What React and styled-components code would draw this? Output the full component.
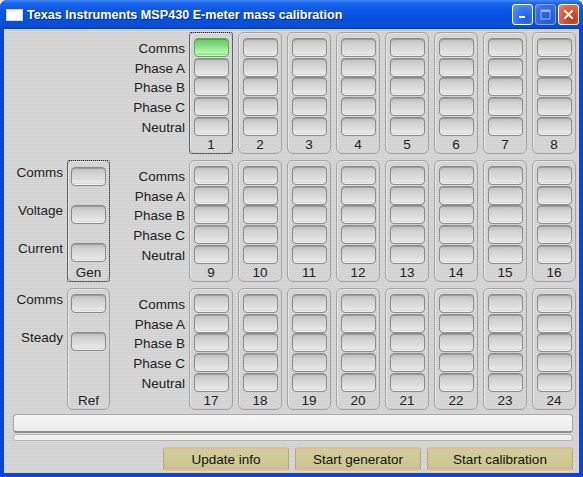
import React from "react";
import styled, { createGlobalStyle, css } from "styled-components";

const GlobalStyle = createGlobalStyle`
  html, body {
    margin: 0;
    padding: 0;
    background: #ece9d8;
  }
  body {
    font-family: "Liberation Sans", Arial, sans-serif;
  }
`;

const meterRows = ["Comms", "Phase A", "Phase B", "Phase C", "Neutral"];

const sections = [
  { side: null, start: 1 },
  {
    side: { name: "Gen", focused: true, rows: ["Comms", "Voltage", "Current"], step: 38, top: 6 },
    start: 9,
  },
  {
    side: { name: "Ref", focused: false, rows: ["Comms", "Steady"], step: 38, top: 5 },
    start: 17,
  },
];

function MinIcon() {
  return (
    <svg width="9" height="9" viewBox="0 0 9 9">
      <rect x="1" y="6" width="6" height="2" fill="#fff" />
    </svg>
  );
}

function MaxIcon() {
  return (
    <svg width="11" height="11" viewBox="0 0 11 11">
      <rect x="1" y="1" width="9" height="9" fill="none" stroke="#9db3ea" strokeWidth="1" />
      <rect x="1" y="1" width="9" height="2" fill="#9db3ea" />
    </svg>
  );
}

function CloseIcon() {
  return (
    <svg width="11" height="11" viewBox="0 0 11 11">
      <path d="M2 2 L9 9 M9 2 L2 9" stroke="#fff" strokeWidth="2" strokeLinecap="square" />
    </svg>
  );
}

export default function App() {
  return (
    <>
      <GlobalStyle />
      <Window>
        <TitleBar>
          <AppIcon />
          <Title>Texas Instruments MSP430 E-meter mass calibration</Title>
          <TitleButtons>
            <CaptionButton>
              <MinIcon />
            </CaptionButton>
            <CaptionButton $disabled>
              <MaxIcon />
            </CaptionButton>
            <CaptionButton $close>
              <CloseIcon />
            </CaptionButton>
          </TitleButtons>
        </TitleBar>

        <Body>
          {sections.map((sec, si) => (
            <Section key={si}>
              <SideSlot>
                {sec.side && (
                  <>
                    <SideLabels $top={sec.side.top}>
                      {sec.side.rows.map((r) => (
                        <SideLabel key={r} $step={sec.side.step}>
                          {r}
                        </SideLabel>
                      ))}
                    </SideLabels>
                    <SideBox $focused={sec.side.focused} $top={sec.side.top}>
                      <SideButtons $step={sec.side.step}>
                        {sec.side.rows.map((r) => (
                          <LedButton key={r} />
                        ))}
                      </SideButtons>
                      <BoxLabel>{sec.side.name}</BoxLabel>
                    </SideBox>
                  </>
                )}
              </SideSlot>

              <MeterLabels>
                {meterRows.map((r) => (
                  <MeterLabel key={r}>{r}</MeterLabel>
                ))}
              </MeterLabels>

              <Columns>
                {Array.from({ length: 8 }, (_, i) => {
                  const n = sec.start + i;
                  return (
                    <MeterBox key={n} $focused={n === 1}>
                      <ButtonStack>
                        {meterRows.map((r, ri) => (
                          <LedButton key={r} $on={n === 1 && ri === 0} />
                        ))}
                      </ButtonStack>
                      <BoxLabel>{n}</BoxLabel>
                    </MeterBox>
                  );
                })}
              </Columns>
            </Section>
          ))}

          <Progress />
          <ThinBar />

          <ActionBar>
            <ActionButton $w={126}>Update info</ActionButton>
            <ActionButton $w={126}>Start generator</ActionButton>
            <ActionButton $w={146}>Start calibration</ActionButton>
          </ActionBar>
        </Body>
      </Window>
    </>
  );
}

const Window = styled.div`
  width: 583px;
  height: 477px;
  box-sizing: border-box;
  background: #0a46d8;
  padding: 0 4px 4px 4px;
  display: flex;
  flex-direction: column;
  border-radius: 7px 7px 0 0;
  overflow: hidden;
`;

const TitleBar = styled.div`
  height: 29px;
  margin: 0 -4px;
  padding: 0 4px 0 6px;
  display: flex;
  align-items: center;
  background: linear-gradient(
    to bottom,
    #3d8af7 0%,
    #1b63ea 12%,
    #0a55e6 40%,
    #0650dd 70%,
    #0a4fd6 90%,
    #073cb0 100%
  );
`;

const AppIcon = styled.div`
  width: 15px;
  height: 10px;
  background: #fff;
  border: 1px solid #c9d8f8;
  margin-right: 4px;
`;

const Title = styled.div`
  color: #fff;
  font-family: "Liberation Sans", Arial, sans-serif;
  font-weight: bold;
  font-size: 12.6px;
  padding-top: 1px;
  text-shadow: 1px 1px 0 #0a2a80;
  flex: 1;
  white-space: nowrap;
`;

const TitleButtons = styled.div`
  display: flex;
  gap: 2px;
`;

const CaptionButton = styled.div`
  width: 21px;
  height: 21px;
  box-sizing: border-box;
  border: 1px solid #fff;
  border-radius: 3px;
  display: flex;
  align-items: center;
  justify-content: center;
  background: radial-gradient(circle at 70% 75%, #1b5be8 0%, #3b7cf5 60%, #6a9bf7 100%);
  ${(p) =>
    p.$disabled &&
    css`
      border-color: #7fa2ee;
      background: radial-gradient(circle at 70% 75%, #2058d8 0%, #3a6be0 70%, #5a86e8 100%);
    `}
  ${(p) =>
    p.$close &&
    css`
      background: radial-gradient(circle at 70% 75%, #c0361a 0%, #e0603c 60%, #ef8a68 100%);
    `}
`;

const Body = styled.div`
  flex: 1;
  display: flex;
  flex-direction: column;
  padding: 3px 0 0 0;
  background: repeating-linear-gradient(
    to bottom,
    #d9d9d9 0px,
    #d9d9d9 1px,
    #cfcfcf 1px,
    #cfcfcf 2px
  );
`;

const Section = styled.div`
  display: flex;
  align-items: flex-start;
  margin-bottom: 6px;
  height: 122px;
`;

const SideSlot = styled.div`
  width: 106px;
  flex-shrink: 0;
  height: 100%;
  display: flex;
  gap: 4px;
`;

const SideLabels = styled.div`
  width: 59px;
  padding-top: ${(p) => p.$top - 2}px;
  display: flex;
  flex-direction: column;
  align-items: flex-end;
`;

const SideLabel = styled.div`
  height: ${(p) => p.$step}px;
  line-height: 18px;
  font-size: 13.5px;
  color: #222;
`;

const boxBase = css`
  position: relative;
  box-sizing: border-box;
  height: 122px;
  flex-shrink: 0;
  border: 1px solid #a4a4a4;
  border-radius: 6px;
  box-shadow: inset 1px 1px 0 #e6e6e6;
  display: flex;
  flex-direction: column;
  align-items: center;
  ${(p) =>
    p.$focused &&
    css`
      &::before {
        content: "";
        position: absolute;
        inset: -1px;
        border: 1px dotted #222;
        border-radius: 2px;
      }
    `}
`;

const SideBox = styled.div`
  ${boxBase}
  width: 43px;
  padding-top: ${(p) => p.$top}px;
`;

const SideButtons = styled.div`
  flex: 1;
  display: flex;
  flex-direction: column;
  gap: ${(p) => p.$step - 19}px;
`;

const MeterLabels = styled.div`
  width: 75px;
  flex-shrink: 0;
  margin-right: 4px;
  padding-top: 7px;
  display: flex;
  flex-direction: column;
  align-items: flex-end;
`;

const MeterLabel = styled.div`
  height: 19.7px;
  line-height: 19px;
  font-size: 13.5px;
  color: #222;
`;

const Columns = styled.div`
  display: flex;
  gap: 5px;
`;

const MeterBox = styled.div`
  ${boxBase}
  width: 44px;
  padding-top: 5px;
`;

const ButtonStack = styled.div`
  display: flex;
  flex-direction: column;
  gap: 0.7px;
`;

const LedButton = styled.div`
  width: 35px;
  height: 19px;
  box-sizing: border-box;
  border: 1px solid #8c8c8c;
  border-radius: 4px;
  background: linear-gradient(
    to bottom,
    #bdbdbd 0%,
    #d2d2d2 30%,
    #dddddd 65%,
    #e8e8e8 85%,
    #c6c6c6 100%
  );
  box-shadow: inset 0 1px 0 #9c9c9c, inset 0 -1px 0 #f0f0f0;
  ${(p) =>
    p.$on &&
    css`
      border-color: #5ea85e;
      background: linear-gradient(
        to bottom,
        #6cc46c 0%,
        #84d884 35%,
        #9cee94 60%,
        #b8f8a8 80%,
        #7cc47c 100%
      );
      box-shadow: inset 0 1px 0 #4f9f4f, inset 0 -1px 0 #d8ffd0;
    `}
`;

const BoxLabel = styled.div`
  margin-top: auto;
  height: 16px;
  line-height: 15px;
  font-size: 13.5px;
  color: #222;
  text-align: center;
`;

const Progress = styled.div`
  margin: -2px 6px 0 9px;
  height: 19px;
  box-sizing: border-box;
  border: 1px solid #a8a8a8;
  border-bottom: 2px solid #8e8e8e;
  border-radius: 4px;
  background: linear-gradient(to bottom, #f6f6f6, #ececec);
`;

const ThinBar = styled.div`
  margin: 1px 6px 0 9px;
  height: 7px;
  box-sizing: border-box;
  border: 1px solid #b4b4b4;
  border-radius: 3px;
  background: #efefef;
`;

const ActionBar = styled.div`
  margin: 6px 6px 0 0;
  display: flex;
  justify-content: flex-end;
  gap: 6px;
`;

const ActionButton = styled.div`
  width: ${(p) => p.$w}px;
  height: 24px;
  box-sizing: border-box;
  border: 1px solid #b8a878;
  border-top: 2px solid #e0c08a;
  border-bottom: 2px solid #e8b89a;
  border-radius: 3px;
  background: linear-gradient(to bottom, #d2cc9c, #cfc996 60%, #c8c290);
  font-size: 13.5px;
  color: #111;
  display: flex;
  align-items: center;
  justify-content: center;
`;
